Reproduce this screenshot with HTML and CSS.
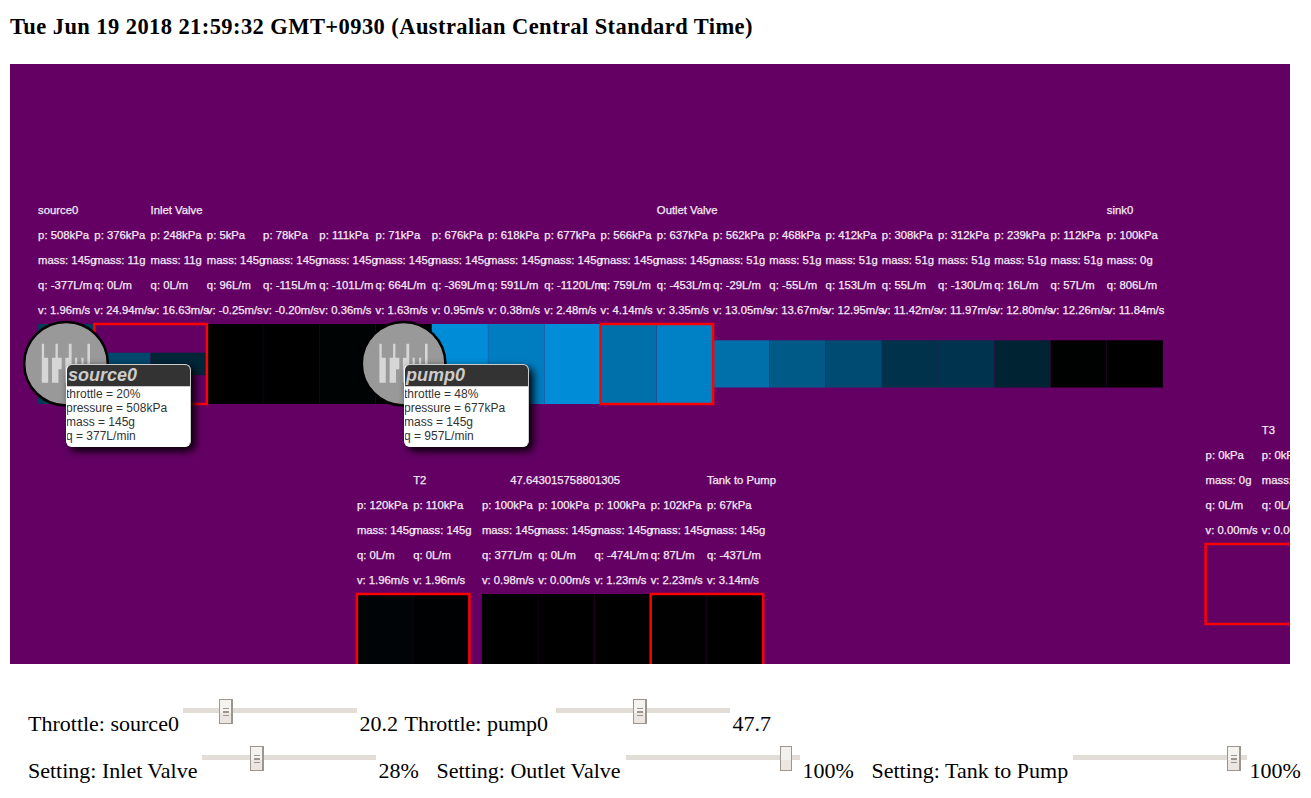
FILE: index.html
```html
<!DOCTYPE html>
<html lang="en">
<head>
<meta charset="utf-8">
<title>Pipe simulation</title>
<link rel="stylesheet" href="styles.css">
</head>
<body>
<h3 class="clock">Tue Jun 19 2018 21:59:32 GMT+0930 (Australian Central Standard Time)</h3>
<div class="stage">
  <svg class="network" viewBox="10 64 1280 600" width="1280" height="600">
    <g id="cells"></g>
    <g id="frames" class="frame"></g>
    <g id="readings" class="reading"></g>
    <defs>
      <g id="device">
        <circle class="device-body" r="41.8"/>
        <path class="device-bars" d="M-24.2-20h2.3v14h4.1v25h-6.4zM-10.5-20h2.3v14h3.9v11.5h-3.3v13.5h-6.4v-25h3.5zM2.8-20h2.8v39h-6.3v-25h3.5zM9-6h2.2v25h-2.2zM15.4-6h2.2v25h-2.2zM21.4-20h2.6v39h-2.6z"/>
      </g>
    </defs>
    <use href="#device" x="66" y="363.7"/>
    <use href="#device" x="403.6" y="363.7"/>
  </svg>
  <div class="tip tip-source">
    <div class="tip-title">source0</div>
    <div class="tip-body"><div>throttle = 20%</div><div>pressure = 508kPa</div><div>mass = 145g</div><div>q = 377L/min</div></div>
  </div>
  <div class="tip tip-pump">
    <div class="tip-title">pump0</div>
    <div class="tip-body"><div>throttle = 48%</div><div>pressure = 677kPa</div><div>mass = 145g</div><div>q = 957L/min</div></div>
  </div>
</div>
<div class="controls">
  <div class="row">
    <span class="label w-source">Throttle: source0</span><div class="slider"><div class="thumb grip" style="margin-left:36px"></div></div><span class="value w-num">20.2</span>
    <span class="label w-pump">Throttle: pump0</span><div class="slider"><div class="thumb grip" style="margin-left:77px"></div></div><span class="value w-num">47.7</span>
  </div>
  <div class="row">
    <span class="label w-inlet">Setting: Inlet Valve</span><div class="slider"><div class="thumb grip" style="margin-left:48px"></div></div><span class="value w-short">28%</span>
    <span class="label w-outlet">Setting: Outlet Valve</span><div class="slider"><div class="thumb" style="margin-left:154px"></div></div><span class="value w-long">100%</span>
    <span class="label w-tank">Setting: Tank to Pump</span><div class="slider"><div class="thumb grip" style="margin-left:154px"></div></div><span class="value">100%</span>
  </div>
</div>
<script src="network.js"></script>
</body>
</html>
```

FILE: styles.css
```css
body {
  margin: 0;
  background: #fff;
  color: #000;
  font-family: "Liberation Serif", "Times New Roman", serif;
  overflow: hidden;
}
.clock {
  margin: 0;
  padding: 14px 0 0 10px;
  height: 50px;
  font-size: 22.5px;
  line-height: 26px;
  letter-spacing: 0.42px;
  white-space: nowrap;
}
.stage {
  position: relative;
  width: 1280px;
  height: 600px;
  margin-left: 10px;
  background: #640064;
}
.network { display: block; }
.reading {
  font-family: "Liberation Sans", Arial, sans-serif;
  font-size: 11.3px;
  fill: #f4eaf4;
  stroke: #f4eaf4;
  stroke-width: 0.25px;
}
.frame {
  fill: none;
  stroke: #f00;
  stroke-width: 2.5px;
}
.device-body {
  fill: #999;
  stroke: #000;
  stroke-width: 2.5px;
}
.device-bars { fill: #d6d6d6; }
.tip {
  position: absolute;
  top: 300px;
  width: 125px;
  height: 83px;
  box-sizing: border-box;
  border: 1px solid #ccc;
  border-color: #ccc #ccc #fff #fff;
  border-radius: 6px;
  background: #fff;
  box-shadow: 4px 4px 8px #000;
  overflow: hidden;
  font-family: "Liberation Sans", Arial, sans-serif;
  font-size: 12px;
  line-height: 14px;
  color: #333;
}
.tip-source { left: 56px; }
.tip-pump { left: 394px; }
.tip-title {
  height: 21px;
  padding-left: 1px;
  border-bottom: 1px solid #ccc;
  background: #333;
  color: #ccc;
  font-size: 18px;
  font-style: italic;
  font-weight: bold;
  line-height: 21px;
}
.tip-body { margin-left: -1px; }
.controls { padding: 32px 0 0 28px; }
.row {
  display: flex;
  height: 47px;
  font-size: 22px;
  line-height: 26px;
  white-space: nowrap;
}
.label, .value { flex: none; padding-top: 15px; }
.value { margin-left: 2.5px; }
.w-source { width: 155px; }
.w-pump { width: 151.5px; }
.w-inlet { width: 174px; }
.w-outlet { width: 189.5px; }
.w-tank { width: 201.5px; }
.w-num { width: 45px; }
.w-short { width: 58px; }
.w-long { width: 69px; }
.slider {
  flex: none;
  width: 174px;
  height: 25px;
  margin-top: 3px;
  background: linear-gradient(#e2ddd6, #e2ddd6) 0 9px / 100% 5px no-repeat;
}
.thumb {
  width: 12px;
  height: 25px;
  box-sizing: border-box;
  border: 1px solid #9d968e;
  background: linear-gradient(#f3f1ee 0 55%, #ebe6e2 55%);
}
.grip {
  width: 14px;
  border-right-width: 2px;
  background:
    linear-gradient(#9d968e, #9d968e) 3px 8px / 6px 1px no-repeat,
    linear-gradient(#9d968e, #9d968e) 3px 11px / 6px 2px no-repeat,
    linear-gradient(#9d968e, #9d968e) 3px 15px / 6px 1px no-repeat,
    linear-gradient(#f5f3f0 0 55%, #ebe6e2 55%);
}
```

FILE: network.js
```js
const STEP = 56.25;
// Cell: [pressure, mass, flow, velocity, colour, label]
const mainLine = [
  [508, 145, -377, "1.96", "#003c5a", "source0"],
  [376, 11, 0, "24.94", "#00486c"],
  [248, 11, 0, "16.63", "#002638", "Inlet Valve"],
  [5, 145, 96, "-0.25", "#000"],
  [78, 145, -115, "-0.20", "#000"],
  [111, 145, -101, "0.36", "#000304"],
  [71, 145, 664, "1.63", "#000"],
  [676, 145, -369, "0.95", "#008cd6"],
  [618, 145, 591, "0.38", "#007dc0"],
  [677, 145, -1120, "2.48", "#008cd6"],
  [566, 145, 759, "4.14", "#0070ab"],
  [637, 145, -453, "3.35", "#0081c6", "Outlet Valve"],
  [562, 51, -29, "13.05", "#0070ab"],
  [468, 51, -55, "13.67", "#005a88"],
  [412, 51, 153, "12.95", "#004b72"],
  [308, 51, 55, "11.42", "#00324c"],
  [312, 51, -130, "11.97", "#00344e"],
  [239, 51, 16, "12.80", "#002334"],
  [112, 51, 57, "12.26", "#000202"],
  [100, 0, 806, "11.84", "#000", "sink0"]
];
const tankTwo = [
  [120, 145, 0, "1.96", "#000407"],
  [110, 145, 0, "1.96", "#000103", "T2"]
];
const tankLine = [
  [100, 145, 377, "0.98", "#000"],
  [100, 145, 0, "0.00", "#000"],
  [100, 145, -474, "1.23", "#000"],
  [102, 145, 87, "2.23", "#000100"],
  [67, 145, -437, "3.14", "#000", "Tank to Pump"]
];
const tankThree = [
  [0, 0, 0, "0.00", "none"],
  [0, 0, 0, "0.00", "none", "T3"]
];

function add(parent, tag, attrs, text) {
  const node = document.createElementNS("http://www.w3.org/2000/svg", tag);
  for (const key in attrs) node.setAttribute(key, attrs[key]);
  if (text) node.textContent = text;
  document.getElementById(parent).appendChild(node);
}

function drawLine(cells, x0, y0, shape) {
  cells.forEach(([p, mass, q, v, fill, label], i) => {
    const x = x0 + i * STEP;
    const [dy, height] = shape(i);
    add("cells", "rect", { x, y: y0 + dy, width: 56.05, height, fill });
    const lines = [label, `p: ${p}kPa`, `mass: ${mass}g`, `q: ${q}L/m`, `v: ${v}m/s`];
    lines.forEach((text, row) => {
      if (text) add("readings", "text", { x, y: y0 - 110 + row * 25 }, text);
    });
  });
}

function drawFrame(x, y) {
  add("frames", "rect", { x, y, width: 2 * STEP, height: 80 });
}

const full = () => [0, 80];
drawLine(mainLine, 38.1, 324, i => i === 1 || i === 2 ? [28.7, 22.5] : i > 11 ? [16.3, 47.2] : [0, 80]);
drawLine(tankTwo, 356.9, 594, full);
drawLine(tankLine, 481.9, 594, full);
drawLine(tankThree, 1205.6, 544, full);
add("readings", "text", { x: 510.2, y: 484 }, "47.643015758801305");

drawFrame(94.4, 324);
drawFrame(600.6, 324);
drawFrame(356.9, 594);
drawFrame(650.65, 594);
drawFrame(1205.6, 544);
```
